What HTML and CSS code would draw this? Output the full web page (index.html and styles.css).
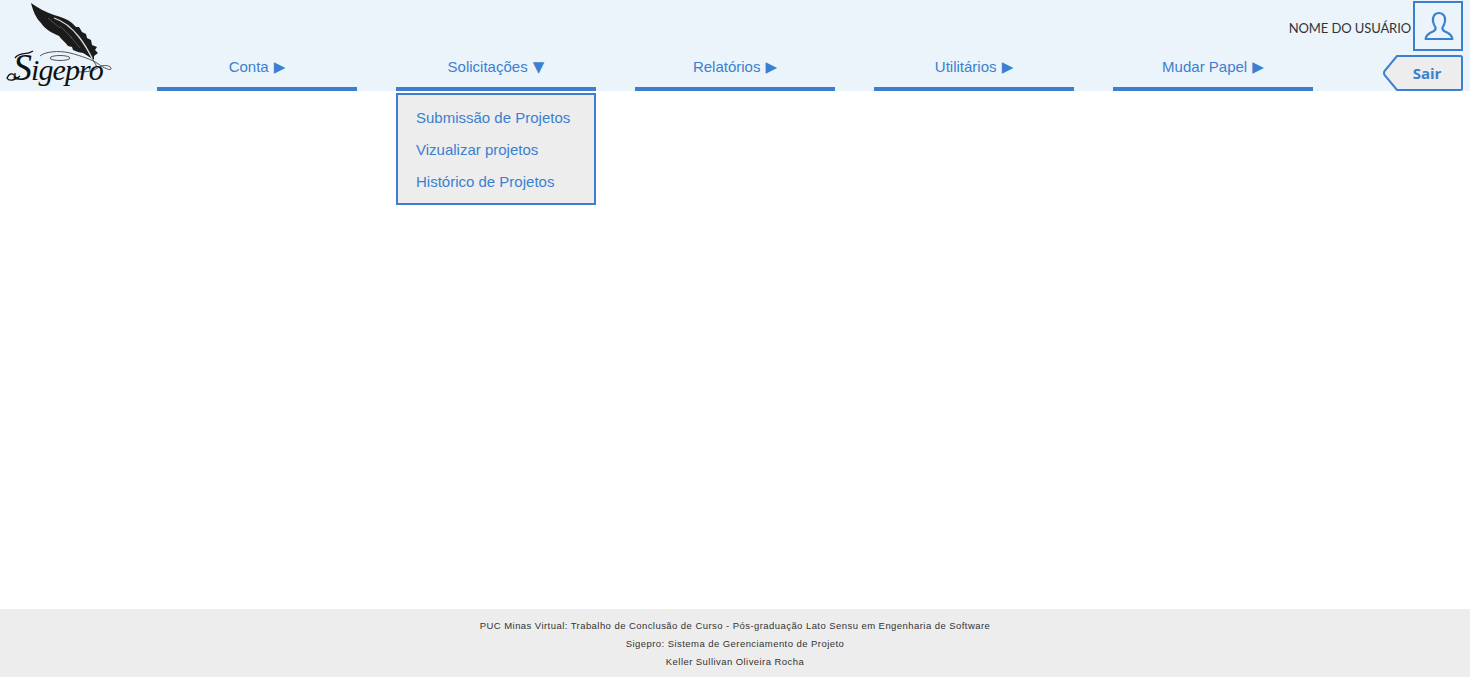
FILE: index.html
```html
<!DOCTYPE html>
<html lang="pt">
<head>
<meta charset="utf-8">
<title>Sigepro</title>
<link rel="stylesheet" href="styles.css">
</head>
<body>
<div class="page">
  <header class="header">
    <div class="logo">
      <svg class="logo-art" width="157" height="91" viewBox="0 0 157 91" aria-hidden="true">
        <path class="feather" d="M31 3 C38 8 45 12 54 15 C61 17 67 19 72 23 L76 27 L79 27 L82 32 L86 34 L87 38 L91 40 L92 45 L97 47 L95 50 L98 53 L94 56 L94 60 L91 58 C88 56 86 55 83 53 L78 52 L73 50 L72 47 L68 46 C65 42 62 40 59 36 C52 33 45 29 41 23 C36 18 33 11 31 3 Z"/>
        <path class="quill" d="M54 18 C63 21 72 28 79 37 C86 46 90 54 93 60"/>
        <path class="quill-end" d="M92 58 L97 67"/>
        <path class="barb" d="M60 26 L72 38 M48 18 L60 28 M70 36 L80 48"/>
        <path class="swirl" d="M40 56 C44 52 58 50 70 53 C82 56 92 60 97 63 C101 66 109 71 111 69 C112 66 104 64 99 67 C94 71 88 72 76 72"/>
        <ellipse class="swirl" cx="60" cy="58" rx="10" ry="2.500"/>
        <path class="swash" d="M15 58 C20 51 26 56 33 51 M14 75 C10 72 8 76 7 78 C9 82 16 80 20 76"/>
      </svg>
      <span class="logo-text"><span class="logo-cap">S</span>igepro</span>
    </div>
    <nav class="nav">
      <div class="nav-item"><a class="nav-link">Conta <span class="arrow">▶</span></a></div>
      <div class="nav-item nav-open">
        <a class="nav-link">Solicitações <span class="arrow">▼</span></a>
        <ul class="dropdown">
          <li>Submissão de Projetos</li>
          <li>Vizualizar projetos</li>
          <li>Histórico de Projetos</li>
        </ul>
      </div>
      <div class="nav-item"><a class="nav-link">Relatórios <span class="arrow">▶</span></a></div>
      <div class="nav-item"><a class="nav-link">Utilitários <span class="arrow">▶</span></a></div>
      <div class="nav-item"><a class="nav-link">Mudar Papel <span class="arrow">▶</span></a></div>
    </nav>
    <div class="user">
      <div class="user-row">
        <span class="user-name">NOME DO USUÁRIO</span>
        <div class="avatar">
          <svg class="avatar-icon" width="30" height="30" viewBox="0 0 30 30" aria-hidden="true">
            <path class="avatar-line" d="M15 2 C10.500 2 8.500 5.500 9 10 C9.300 13 10.500 15 11.500 16.500 C12 18.500 11 19.500 9 20.500 C5.500 22 2.500 23.500 1.800 27 L1.800 28 L28.200 28 L28.200 27 C27.500 23.500 24.500 22 21 20.500 C19 19.500 18 18.500 18.500 16.500 C19.500 15 20.700 13 21 10 C21.500 5.500 19.500 2 15 2 Z"/>
          </svg>
        </div>
      </div>
      <button class="logout">
        <svg class="logout-shape" width="80" height="36" viewBox="0 0 80 36" aria-hidden="true">
          <path d="M14 1 L77.500 1 Q79 1 79 2.500 L79 33.500 Q79 35 77.500 35 L14 35 L1.500 20 Q0.500 18 1.500 16 Z"/>
        </svg>
        <span class="logout-text">Sair</span>
      </button>
    </div>
  </header>
  <main class="content"></main>
  <footer class="footer">
    <p>PUC Minas Virtual: Trabalho de Conclusão de Curso - Pós-graduação Lato Sensu em Engenharia de Software</p>
    <p>Sigepro: Sistema de Gerenciamento de Projeto</p>
    <p>Keller Sullivan Oliveira Rocha</p>
  </footer>
</div>
</body>
</html>
```

FILE: styles.css
```css
* { box-sizing: border-box; }
html, body { margin: 0; padding: 0; height: 100%; }
body { font-family: "Liberation Sans", Arial, sans-serif; background: #fff; overflow: hidden; }
.page { display: flex; flex-direction: column; height: 677px; }
.header { display: flex; height: 91px; background: #ebf3fb; flex: none; }
.logo { position: relative; width: 157px; flex: none; }
.logo-art { display: block; }
.feather { fill: #1b1b1b; }
.quill { fill: none; stroke: #dcdcdc; stroke-width: 1.3; }
.quill-end { fill: none; stroke: #777; stroke-width: 1.2; }
.barb { fill: none; stroke: #666; stroke-width: 0.7; }
.swirl { fill: none; stroke: #444; stroke-width: 0.9; }
.swash { fill: none; stroke: #111; stroke-width: 1.3; }
.logo-text { position: absolute; left: 13px; top: 49px; font: italic 30px/36px "Liberation Serif", serif; color: #111; letter-spacing: -0.9px; white-space: nowrap; }
.logo-cap { font-size: 38px; letter-spacing: -1px; }
.nav { display: flex; gap: 39px; align-items: flex-end; height: 91px; flex: none; }
.nav-item { position: relative; width: 200px; }
.nav-link { display: block; height: 39px; padding-top: 6px; text-align: center; font-size: 15px; line-height: 18px; color: #3b80d0; border-bottom: 4px solid #3b80d0; }
.arrow { font-family: "DejaVu Sans", sans-serif; font-size: 15px; margin-left: 1px; }
.dropdown { position: absolute; top: 41px; left: 0; width: 200px; height: 112px; margin: 0; padding: 7px 18px; list-style: none; background: #ededed; border: 2px solid #3b80d0; font-size: 15px; color: #3b80d0; }
.dropdown li { height: 32px; line-height: 32px; white-space: nowrap; }
.user { width: 157px; flex: none; padding-right: 7px; padding-top: 1px; display: flex; flex-direction: column; align-items: flex-end; gap: 4px; }
.user-row { display: flex; align-items: center; gap: 2px; flex: none; }
.user-name { font-family: "Lato", sans-serif; font-size: 13px; letter-spacing: -0.1px; color: #333; white-space: nowrap; position: relative; top: 2px; }
.avatar { width: 50px; height: 50px; border: 2px solid #3b80d0; display: flex; align-items: center; justify-content: center; }
.avatar-icon { margin-left: 2px; }
.avatar-line { fill: none; stroke: #3b80d0; stroke-width: 2.200; }
.logout { position: relative; width: 80px; height: 36px; padding: 0 0 0 8px; border: 0; background: none; font: bold 15px "Open Sans", sans-serif; color: #3b80d0; }
.logout-shape { position: absolute; left: 0; top: 0; }
.logout-shape path { fill: #ededed; stroke: #3b80d0; stroke-width: 2; }
.logout-text { position: relative; }
.content { flex: 1; }
.footer { height: 68px; flex: none; padding-top: 8px; background: #ededed; text-align: center; font-size: 9.500px; color: #333; letter-spacing: 0.44px; }
.footer p { margin: 0; height: 18px; line-height: 18px; }
```
